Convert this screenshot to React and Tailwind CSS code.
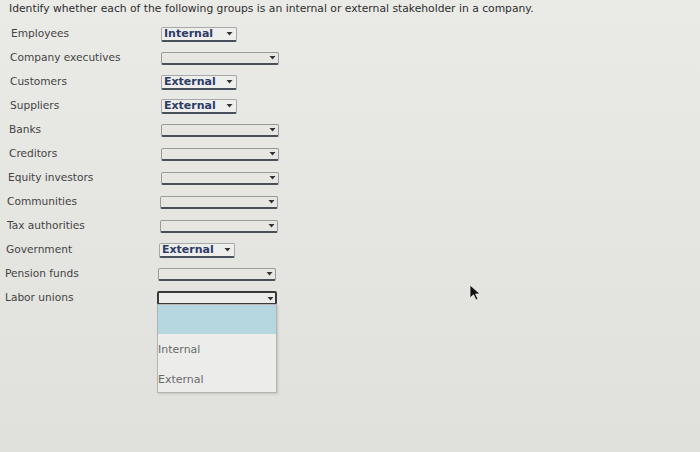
import React from 'react';

const rows = [
  { label: 'Employees', value: 'Internal', pad: 'pl-[11px]', sel: 'ml-0' },
  { label: 'Company executives', value: '', pad: 'pl-[10px]', sel: 'ml-px' },
  { label: 'Customers', value: 'External', pad: 'pl-[10px]', sel: 'ml-px' },
  { label: 'Suppliers', value: 'External', pad: 'pl-[10px]', sel: 'ml-px' },
  { label: 'Banks', value: '', pad: 'pl-[9px]', sel: 'ml-[2px]' },
  { label: 'Creditors', value: '', pad: 'pl-[9px]', sel: 'ml-[2px]' },
  { label: 'Equity investors', value: '', pad: 'pl-[8px]', sel: 'ml-[3px]' },
  { label: 'Communities', value: '', pad: 'pl-[7px]', sel: 'ml-[3px]' },
  { label: 'Tax authorities', value: '', pad: 'pl-[7px]', sel: 'ml-[3px]' },
  { label: 'Government', value: 'External', pad: 'pl-[6px]', sel: 'ml-[3px]' },
  { label: 'Pension funds', value: '', pad: 'pl-[5px]', sel: 'ml-[3px]' },
  { label: 'Labor unions', value: '', pad: 'pl-[5px]', sel: 'ml-[2px]', open: true },
];

const Arrow = () => (
  <svg width="7" height="5" viewBox="0 0 7 5" className="shrink-0">
    <path d="M0.5 1 L6.5 1 L3.5 4.5 Z" fill="#333" />
  </svg>
);

const Select = ({ value, open }) => {
  if (value) {
    return (
      <div className="flex h-[15px] w-[76px] items-center justify-between rounded-[2px] border border-[#a8a8a8] border-b-2 border-b-[#4a4f5c] bg-[#eeeeec] pl-[2px] pr-[3px]">
        <span className="text-[11px] font-bold leading-none text-[#2d3b66]">{value}</span>
        <Arrow />
      </div>
    );
  }
  return (
    <div className="relative">
      <div
        className={
          open
            ? 'flex h-[14px] w-[120px] items-center justify-end rounded-[2px] border-2 border-[#3a3a3a] bg-[#ececea] pr-[1px]'
            : 'flex h-[13px] w-[118px] items-center justify-end rounded-[2px] border border-[#9a9a9a] border-b-2 border-b-[#4a4f5c] bg-[#e6e6e3] pr-[2px]'
        }
      >
        <Arrow />
      </div>
      {open && (
        <div className="absolute left-0 top-[13px] z-10 flex h-[89px] w-[120px] flex-col border border-[#b4b4b2] bg-[#ececea] shadow-[1px_1px_2px_rgba(0,0,0,0.15)]">
          <div className="h-[29px] bg-[#b6d6e0]" />
          <div className="mt-[9px] text-[11px] leading-[14px] text-[#6a6a6a]">Internal</div>
          <div className="mt-[16px] text-[11px] leading-[14px] text-[#6a6a6a]">External</div>
        </div>
      )}
    </div>
  );
};

export default function App() {
  return (
    <div
      className="relative h-[452px] w-[700px] overflow-hidden bg-gradient-to-b from-[#eaeae7] to-[#e0e0dc] text-[#3a3a3a]"
      style={{ fontFamily: '"DejaVu Sans", Verdana, sans-serif' }}
    >
      <div className="flex h-[17px] items-center pl-[9px] pt-px text-[10.75px] text-[#2e2e2e]">
        Identify whether each of the following groups is an internal or external stakeholder in a company.
      </div>
      <div className="mt-[5px] flex flex-col">
        {rows.map((r) => (
          <div key={r.label} className={`flex h-[24px] items-center ${r.pad}`}>
            <div className="w-[150px] text-[10.6px] text-[#444]">{r.label}</div>
            <div className={r.sel}>
              <Select value={r.value} open={r.open} />
            </div>
          </div>
        ))}
      </div>
      <svg
        className="absolute left-[469px] top-[284px]"
        width="14"
        height="18"
        viewBox="0 0 14 18"
      >
        <path d="M1 1 L1 14 L4.5 10.8 L7 16 L9 15 L6.6 10 L11 10 Z" fill="#111" stroke="#eee" strokeWidth="0.8" />
      </svg>
    </div>
  );
}
